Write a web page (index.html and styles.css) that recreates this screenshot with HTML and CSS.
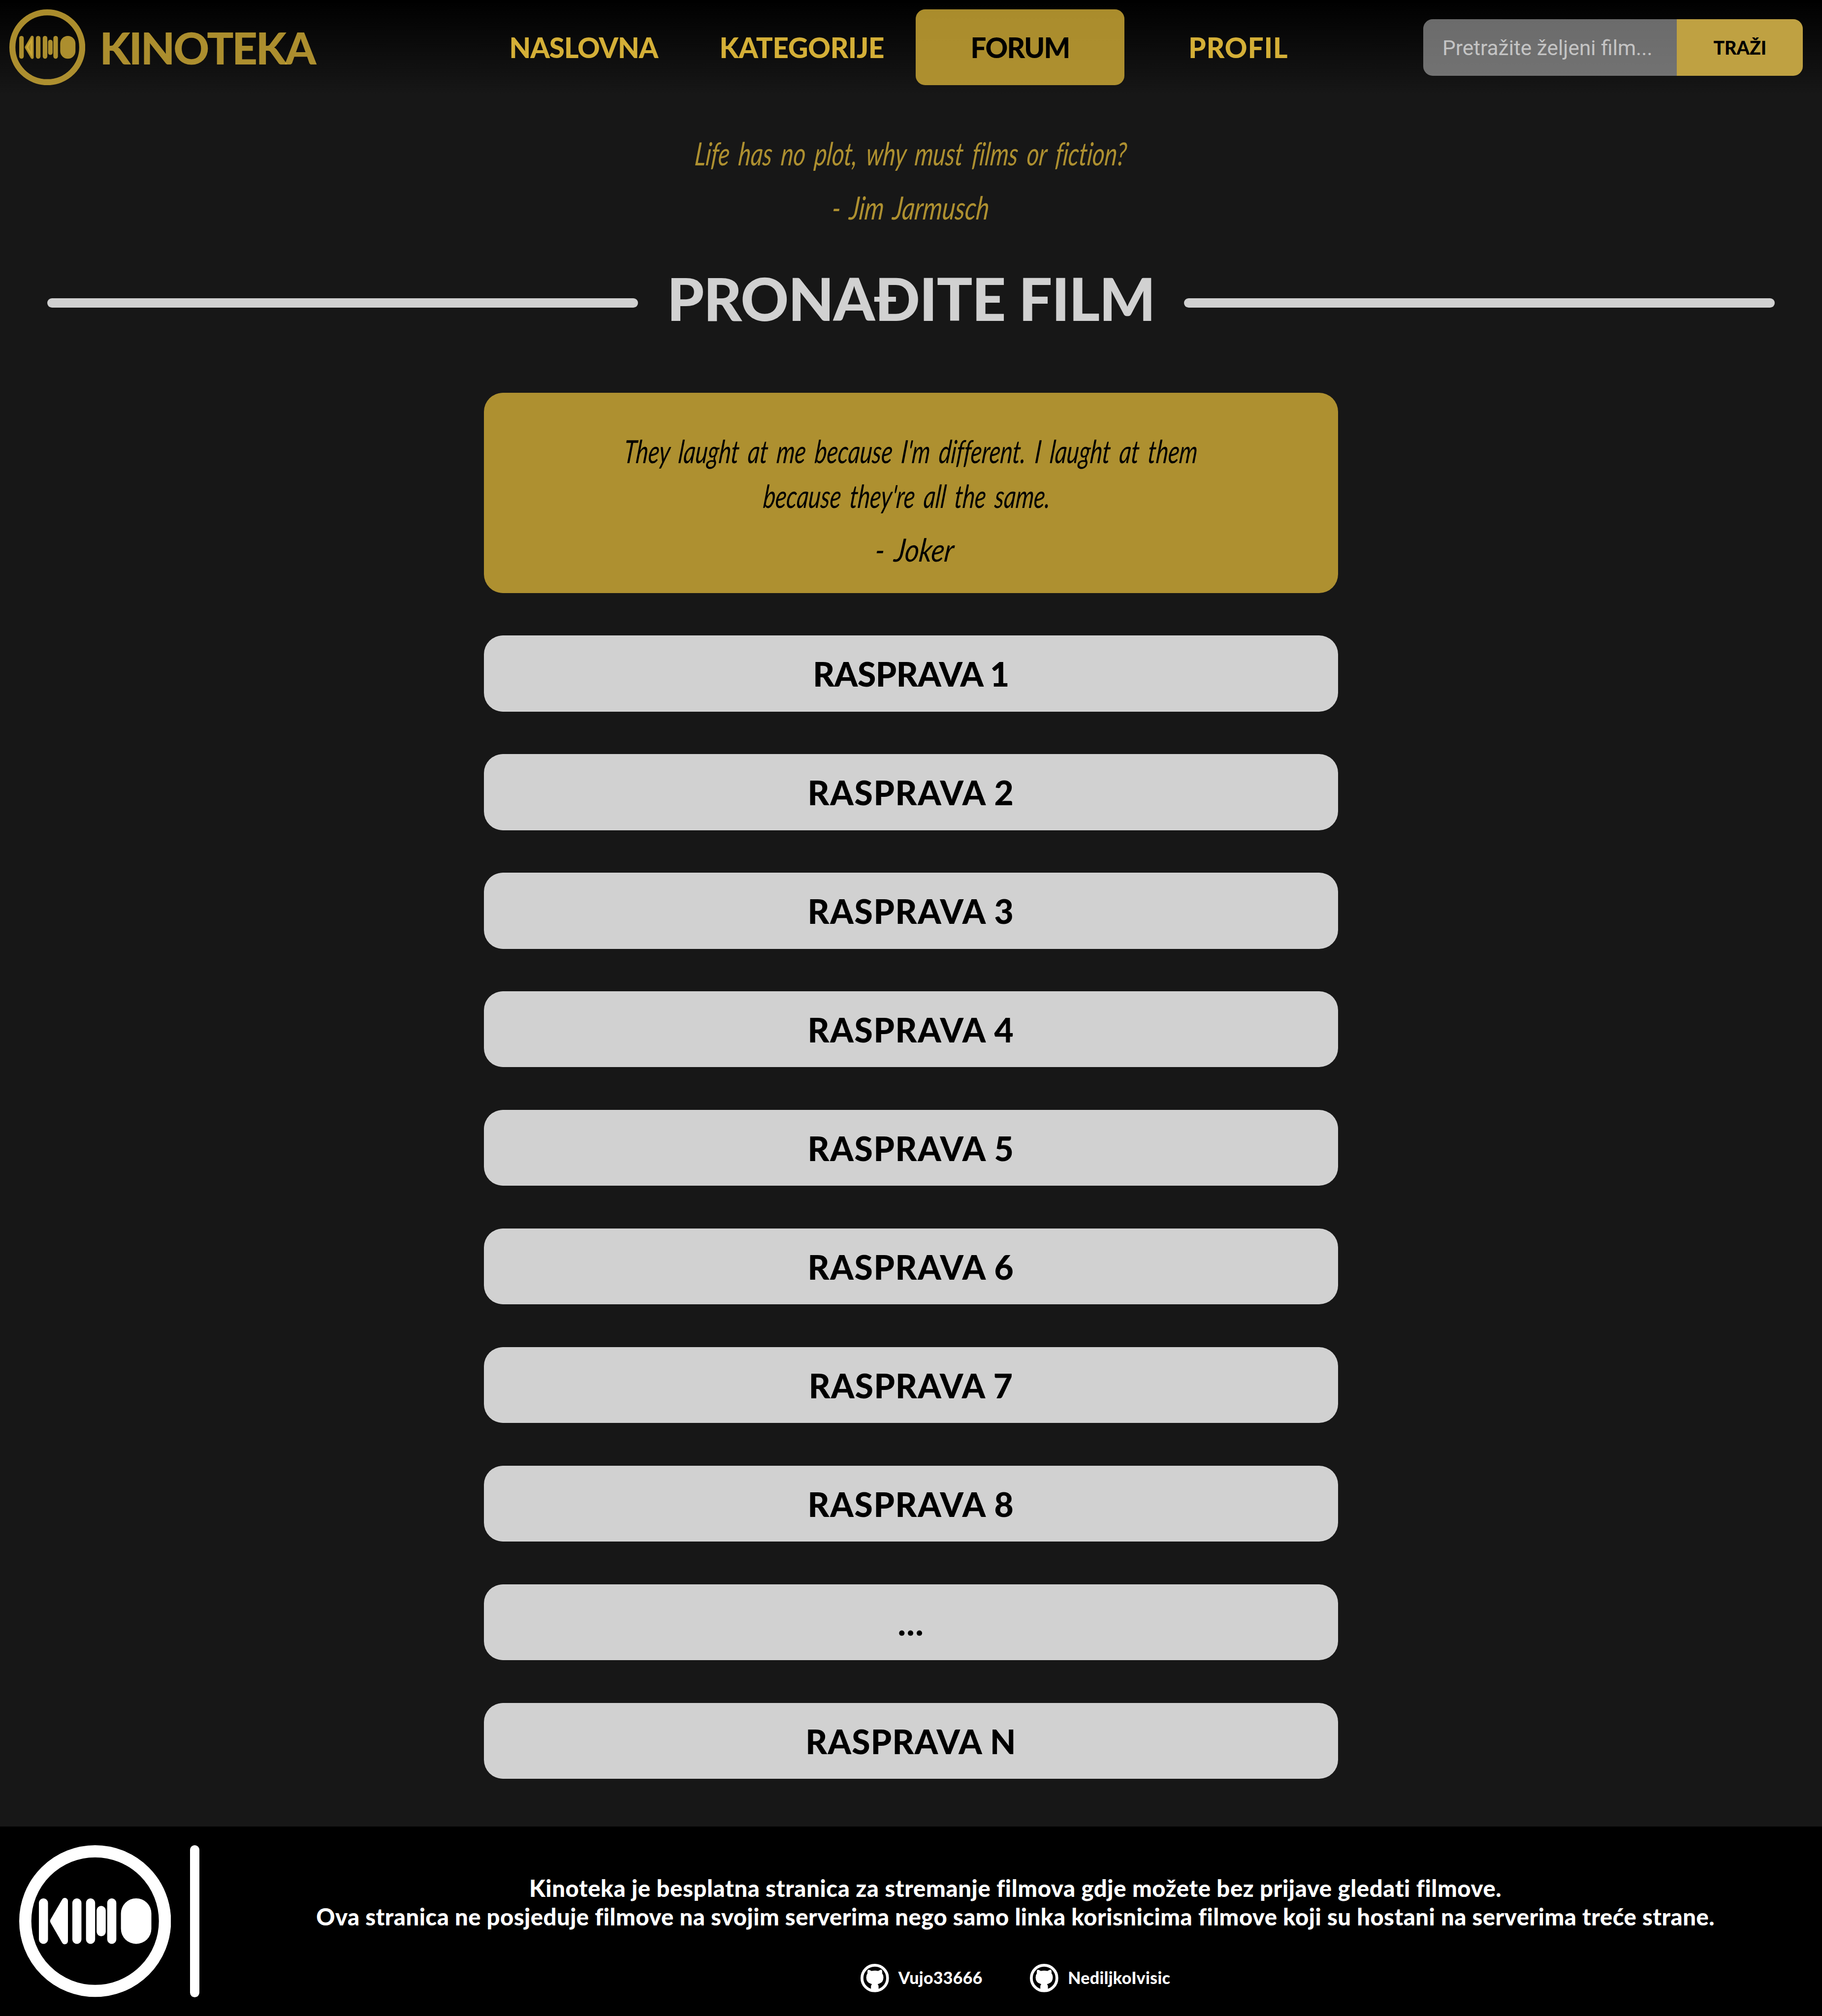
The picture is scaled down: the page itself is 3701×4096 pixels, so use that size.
FILE: index.html
```
<!DOCTYPE html>
<html lang="hr">
<head>
<meta charset="utf-8">
<title>Kinoteka</title>
<link rel="stylesheet" href="styles.css">
</head>
<body>
<svg class="defs" aria-hidden="true">
  <symbol id="logo" viewBox="0 0 320 320">
    <circle cx="160" cy="160" r="147.2" fill="none" stroke="currentColor" stroke-width="25.6"/>
    <g fill="currentColor">
      <rect x="41.5" y="112" width="19.2" height="96" rx="9.6"/>
      <path d="M71.6 160L96.2 117.6V202.4Z" stroke="currentColor" stroke-width="13" stroke-linejoin="round"/>
      <rect x="112" y="112" width="19.2" height="96" rx="9.6"/>
      <rect x="140.8" y="112" width="19.2" height="96" rx="9.6"/>
      <rect x="163.2" y="128" width="19.2" height="64" rx="9.6"/>
      <rect x="185.5" y="112" width="19.2" height="96" rx="9.6"/>
      <rect x="214.4" y="112" width="64.2" height="96" rx="32"/>
    </g>
  </symbol>
  <symbol id="github" viewBox="0 0 60 60">
    <circle cx="30" cy="30" r="27" fill="none" stroke="currentColor" stroke-width="6"/>
    <path fill="currentColor" d="M15 14Q15.5 12 18 12.7Q21 13.8 23 15Q30 13.4 37 15Q40 13.4 43 12.3Q45 12.2 45.4 14.5Q46 17.5 45.5 20Q48.4 23.5 48.3 29Q48 38.5 40 41.5Q38 42.4 36 42.8Q38 45 38 48V57H22V48Q22 45 24 42.8Q12.2 40 12 29Q12 23.5 14.7 20Q14.2 17 15 14Z"/>
  </symbol>
</svg>

<header class="header">
  <a class="brand"><svg class="brand-logo"><use href="#logo"/></svg><span class="brand-name">KINOTEKA</span></a>
  <nav class="nav">
    <a class="nav-item home">NASLOVNA</a>
    <a class="nav-item categories">KATEGORIJE</a>
    <a class="nav-item forum active">FORUM</a>
    <a class="nav-item profile">PROFIL</a>
  </nav>
  <form class="search">
    <input class="search-input" type="text" placeholder="Pretražite željeni film...">
    <button class="search-button" type="button">TRAŽI</button>
  </form>
</header>

<main class="main">
  <blockquote class="quote intro">
    <span class="quote-line">Life has no plot, why must films or fiction?</span>
    <span class="quote-line jarmusch">- Jim Jarmusch</span>
  </blockquote>

  <div class="title-row">
    <span class="rule"></span>
    <h1 class="title">PRONAĐITE FILM</h1>
    <span class="rule"></span>
  </div>

  <div class="topics">
    <blockquote class="quote card">
      <span class="quote-line">They laught at me because I'm different. I laught at them</span>
      <span class="quote-line second">because they're all the same.</span>
      <span class="quote-line joker">- Joker</span>
    </blockquote>
    <a class="topic one">RASPRAVA 1</a>
    <a class="topic">RASPRAVA 2</a>
    <a class="topic">RASPRAVA 3</a>
    <a class="topic">RASPRAVA 4</a>
    <a class="topic">RASPRAVA 5</a>
    <a class="topic">RASPRAVA 6</a>
    <a class="topic seven">RASPRAVA 7</a>
    <a class="topic">RASPRAVA 8</a>
    <a class="topic">...</a>
    <a class="topic last">RASPRAVA N</a>
  </div>
</main>

<footer class="footer">
  <svg class="footer-logo"><use href="#logo"/></svg>
  <span class="divider"></span>
  <div class="footer-content">
    <p class="about"><span class="about-lead">Kinoteka je besplatna stranica za stremanje filmova gdje možete bez prijave gledati filmove.</span><br>Ova stranica ne posjeduje filmove na svojim serverima nego samo linka korisnicima filmove koji su hostani na serverima treće strane.</p>
    <div class="authors">
      <a class="author"><svg class="author-icon"><use href="#github"/></svg>Vujo33666</a>
      <a class="author"><svg class="author-icon"><use href="#github"/></svg>NediljkoIvisic</a>
    </div>
  </div>
</footer>
</body>
</html>
```
FILE: styles.css
```
/* 1rem is 1/384 of the window width, so the layout scales as a whole */
html { font-size: calc(100vw / 384); }
* { box-sizing: border-box; margin: 0; padding: 0; }
body {
  height: 100vh;
  overflow: hidden;
  display: flex;
  flex-direction: column;
  background: #171717;
  color: #000;
  font-family: Lato, sans-serif;
  font-weight: 900;
}
.defs { display: none; }

.header {
  height: 20rem;
  flex: none;
  display: grid;
  grid-template-columns: 99rem 1fr 84rem;
  align-items: center;
  padding-left: 2rem;
  background: linear-gradient(#000, #171717);
}
.brand { display: flex; align-items: center; gap: 3rem; color: rgba(212, 175, 55, .8); }
.brand-logo { width: 16rem; height: 16rem; }
.brand-name { font-size: 9.35rem; line-height: 1; letter-spacing: -.036em; }
.nav { display: flex; gap: 2rem; }
.nav-item {
  width: 44rem;
  height: 16rem;
  line-height: 16.1rem;
  text-align: center;
  border-radius: 2rem;
  font-size: 5.86rem;
  color: #d4af37;
}
.home { letter-spacing: -.018em; }
.categories { letter-spacing: -.006em; }
.forum { letter-spacing: -.03em; }
.profile { letter-spacing: .02em; }
.active { background: rgba(212, 175, 55, .8); color: #000; }
.search {
  width: 80rem;
  height: 12rem;
  display: flex;
  overflow: hidden;
  border-radius: 2rem;
}
.search-input {
  width: 53.4rem;
  border: 0;
  padding: .2rem 4rem 0;
  background: rgba(209, 209, 209, .5);
  font: 400 4.4rem Roboto, sans-serif;
}
.search-input::placeholder { color: #c4c4c4; opacity: 1; }
.search-button {
  flex: 1;
  border: 0;
  background: #bfa142;
  color: #000;
  font: 900 3.9rem Lato, sans-serif;
}

.main { flex: none; height: 365rem; padding-top: 6.6rem; }
.quote {
  display: flex;
  flex-direction: column;
  align-items: center;
  font-size: 6rem;
  font-style: italic;
  font-weight: 400;
  font-variant-ligatures: none;
  word-spacing: .15em;
  white-space: nowrap;
}
/* tall, narrow, strongly slanted handwriting look */
.quote-line { transform: scale(.82, 1.12) skewX(-8deg); }
.intro { color: rgba(212, 175, 55, .8); line-height: 11.4rem; }
.jarmusch { transform: scale(.86, 1.12) skewX(-8deg); }
.title-row {
  display: grid;
  grid-template-columns: 124.5rem 1fr 124.5rem;
  align-items: center;
  height: 12rem;
  margin-top: 7.2rem;
  padding: 0 10rem;
}
.rule { height: 2rem; margin-top: 2.3rem; border-radius: 1rem; background: #d1d1d1; }
.title {
  text-align: center;
  font-size: 12.5rem;
  line-height: 12rem;
  padding-top: .3rem;
  font-weight: 900;
  letter-spacing: -.011em;
  color: #d1d1d1;
}
.topics {
  width: 180rem;
  margin: 14.2rem auto 0;
  display: flex;
  flex-direction: column;
  gap: 9rem;
}
.card {
  height: 42.2rem;
  padding-top: 7.5rem;
  line-height: 9.45rem;
  border-radius: 4rem;
  background: rgba(212, 175, 55, .8);
}
.card .quote-line { transform: scale(.81, 1.12) skewX(-8deg); }
.card .second { padding-right: 2rem; }
.card .joker { line-height: 13.2rem; transform: scale(.96, 1.12) skewX(-8deg); padding-left: 1.6rem; }
.topic {
  height: 16rem;
  line-height: 16.2rem;
  text-align: center;
  border-radius: 4rem;
  background: #d1d1d1;
  font-size: 7.03rem;
  letter-spacing: .025em;
}
.one { letter-spacing: -.007em; }
.seven { letter-spacing: .018em; }
.last { letter-spacing: .018em; }

.footer {
  height: 40rem;
  flex: none;
  display: flex;
  padding: 4rem 0 4rem 4rem;
  background: #000;
  color: #fff;
}
.footer-logo { width: 32rem; height: 32rem; }
.divider { width: 2rem; height: 32rem; margin: 0 2rem 0 4rem; border-radius: 1rem; background: #fff; }
.footer-content { flex: 1; padding-top: 6rem; text-align: center; }
.about { font-size: 4.9rem; line-height: 6rem; letter-spacing: .0095em; }
.about-lead { letter-spacing: .0125em; }
.authors { display: flex; justify-content: center; gap: 10rem; margin-top: 7rem; }
.author { display: flex; align-items: center; gap: 2rem; font-size: 3.52rem; line-height: 6rem; letter-spacing: .01em; }
.author-icon { width: 6rem; height: 6rem; }
```
